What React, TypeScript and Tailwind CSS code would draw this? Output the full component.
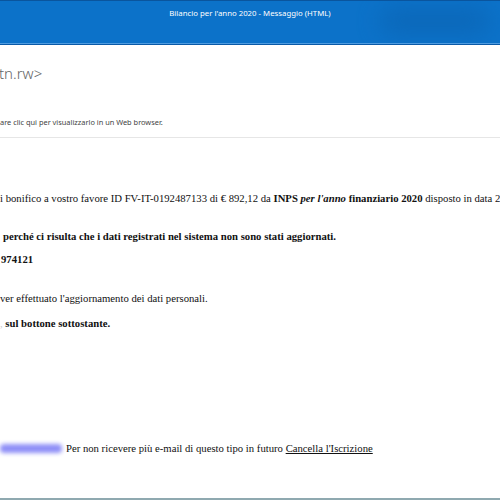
import React from 'react';

const serif = { fontFamily: '"Liberation Serif", "Times New Roman", serif' };

const App: React.FC = () => {
  return (
    <div className="w-[500px] h-[500px] bg-white overflow-hidden flex flex-col relative">
      {/* Title bar */}
      <div className="relative h-[45px] shrink-0 bg-[#0c72c9] border-t border-[#0a559e] border-b border-b-[#0a5aa8] overflow-hidden">
        <div className="absolute right-[10px] top-[8px] w-[110px] h-[24px] bg-[#0a62b0] blur-md rounded-full opacity-70" />
        <div className="absolute inset-x-0 bottom-0 h-px bg-[#4f9ce0]" />
        <p className="relative pt-[7px] text-center text-white text-[7.8px] font-['Noto_Sans',sans-serif]">
          Bilancio per l'anno 2020 - Messaggio (HTML)
        </p>
      </div>

      {/* Sender / info */}
      <div className="font-['Noto_Sans',sans-serif]">
        <p className="mt-[18px] text-[15px] leading-[20px] text-[#666] -ml-px font-light">tn.rw&gt;</p>
        <p className="mt-[33px] text-[7.4px] leading-[12px] text-[#444]">
          are clic qui per visualizzarlo in un Web browser.
        </p>
        <div className="mt-[9px] h-px bg-[#e6e6e6]" />
      </div>

      {/* Body */}
      <div className="text-[10.7px] text-[#111] whitespace-nowrap" style={serif}>
        <p className="mt-[53px] leading-[14px]">
          i bonifico a vostro favore ID FV-IT-0192487133 di € 892,12 da <b>INPS</b>{' '}
          <b><i>per l'anno</i></b> <b>finanziario 2020</b> disposto in data 28/02/2020
        </p>
        <p className="mt-[24px] leading-[14px] font-bold pl-[3px]">
          perché ci risulta che i dati registrati nel sistema non sono stati aggiornati.
        </p>
        <p className="mt-[9px] leading-[14px] font-bold pl-[1px]">974121</p>
        <p className="mt-[25px] leading-[14px]">ver effettuato l'aggiornamento dei dati personali.</p>
        <p className="mt-[11px] leading-[14px] font-bold">
          <span className="font-normal text-[#ccc]">,</span> sul bottone sottostante.
        </p>
      </div>

      {/* Footer */}
      <div className="mt-[110px] flex items-center text-[10.7px] text-[#111] whitespace-nowrap" style={serif}>
        <span className="w-[62px] h-[9px] shrink-0 bg-[#8f8ff7] blur-[2px] rounded-sm" />
        <span className="ml-[4px]">
          Per non ricevere più e-mail di questo tipo in futuro <span className="underline">Cancella l'Iscrizione</span>
        </span>
      </div>

      <div className="absolute bottom-0 inset-x-0 h-[2px] bg-[#8fa9b0]" />
    </div>
  );
};

export default App;
